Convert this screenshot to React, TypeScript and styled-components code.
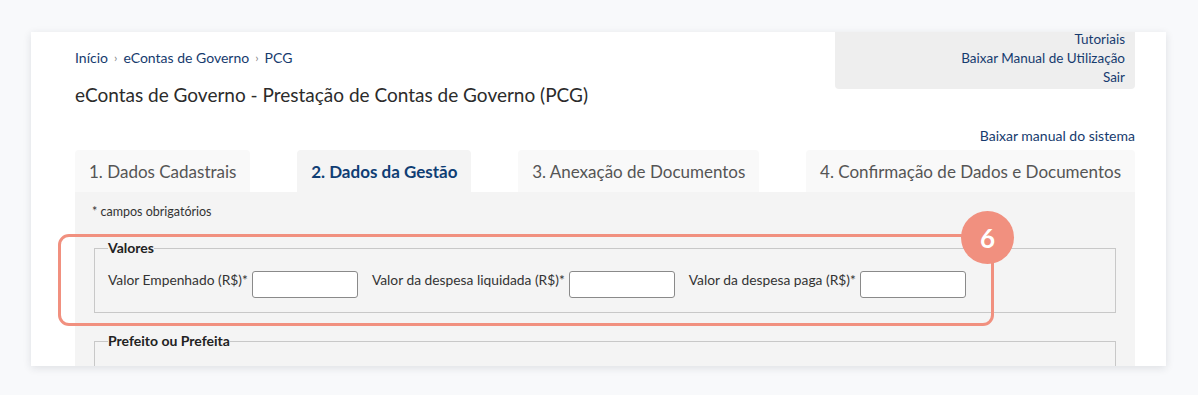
import styled, { createGlobalStyle } from "styled-components";

const GlobalStyle = createGlobalStyle`
  html, body {
    margin: 0;
    padding: 0;
    background: #f8f9fb;
    font-family: Lato, "Noto Sans", sans-serif;
  }
  * {
    box-sizing: border-box;
  }
`;

const Page = styled.div`
  padding: 32px 32px 0 31px;
  height: 395px;
  overflow: hidden;
`;

const Card = styled.div`
  position: relative;
  width: 1135px;
  height: 334px;
  background: #ffffff;
  padding: 0 31px 0 44px;
  box-shadow: 0 2px 8px rgba(30, 40, 60, 0.12);
  overflow: hidden;
`;

const Header = styled.div`
  display: flex;
  justify-content: space-between;
  align-items: flex-start;
`;

const TitleBlock = styled.div`
  padding-top: 17px;
`;

const Breadcrumb = styled.nav`
  display: flex;
  align-items: center;
  gap: 6px;
  font-size: 14px;
  line-height: 18px;
  color: #163b6e;
`;

const Crumb = styled.a`
  color: #163b6e;
  text-decoration: none;
`;

const Sep = styled.span`
  color: #888;
  font-size: 12px;
`;

const Title = styled.h1`
  margin: 16px 0 0;
  font-size: 19px;
  line-height: 24px;
  font-weight: 400;
  color: #2b2b2b;
`;

const UserBox = styled.div`
  margin-top: -2px;
  width: 300px;
  height: 59px;
  padding: 0 10px;
  background: #eeeeee;
  border-radius: 0 0 4px 4px;
  display: flex;
  flex-direction: column;
  align-items: flex-end;
`;

const BoxLink = styled.a`
  font-size: 13.5px;
  line-height: 19px;
  color: #163b6e;
  text-decoration: none;
`;

const ManualRow = styled.div`
  display: flex;
  justify-content: flex-end;
  margin-top: 20px;
`;

const ManualLink = styled.a`
  font-size: 14px;
  line-height: 18px;
  color: #163b6e;
  text-decoration: none;
`;

const Tabs = styled.div`
  display: flex;
  justify-content: space-between;
  margin-top: 5px;
`;

const Tab = styled.div<{ $active?: boolean }>`
  height: 42px;
  padding: 0 14px;
  display: flex;
  align-items: center;
  border-radius: 4px 4px 0 0;
  font-size: 17px;
  background: ${(p) => (p.$active ? "#f4f4f4" : "#f9f9f9")};
  color: ${(p) => (p.$active ? "#0f3e74" : "#555555")};
  font-weight: ${(p) => (p.$active ? 700 : 400)};
`;

const Panel = styled.div`
  background: #f4f4f4;
  padding: 12px 19px 0;
  height: 200px;
`;

const Required = styled.div`
  font-size: 12.5px;
  line-height: 16px;
  color: #333;
  margin-left: -2px;
  margin-bottom: 20px;
`;

const Fieldset = styled.fieldset`
  margin: 0 0 20px;
  padding: 15px 13px 14px;
  border: 1px solid #c8c8c8;
  min-width: 0;
`;

const Legend = styled.legend`
  padding: 0;
  font-size: 14px;
  line-height: 16px;
  font-weight: 700;
  color: #222;
`;

const FieldRow = styled.div`
  display: flex;
  align-items: center;
  gap: 14px;
`;

const Field = styled.div`
  display: flex;
  align-items: center;
  gap: 4px;
`;

const Label = styled.label`
  font-size: 13.8px;
  line-height: 16px;
  color: #333;
  margin-bottom: 10px;
`;

const Input = styled.input`
  width: 106px;
  height: 27px;
  border: 1px solid #8a8a8a;
  border-radius: 3px;
  background: #fff;
`;

const Highlight = styled.div`
  position: absolute;
  left: 27px;
  top: 202px;
  width: 936px;
  height: 92px;
  border: 3px solid #f1907f;
  border-radius: 11px;
  pointer-events: none;
`;

const Badge = styled.div`
  position: absolute;
  left: 930px;
  top: 179px;
  width: 53px;
  height: 53px;
  border-radius: 50%;
  background: #f1907f;
  color: #fff;
  display: flex;
  align-items: center;
  justify-content: center;
  font-size: 26px;
  font-weight: 700;
`;

const fields = [
  "Valor Empenhado (R$)*",
  "Valor da despesa liquidada (R$)*",
  "Valor da despesa paga (R$)*",
];

const tabs = [
  "1. Dados Cadastrais",
  "2. Dados da Gestão",
  "3. Anexação de Documentos",
  "4. Confirmação de Dados e Documentos",
];

export default function App() {
  return (
    <>
      <GlobalStyle />
      <Page>
        <Card>
          <Header>
            <TitleBlock>
              <Breadcrumb>
                <Crumb>Início</Crumb>
                <Sep>›</Sep>
                <Crumb>eContas de Governo</Crumb>
                <Sep>›</Sep>
                <Crumb>PCG</Crumb>
              </Breadcrumb>
              <Title>eContas de Governo - Prestação de Contas de Governo (PCG)</Title>
            </TitleBlock>
            <UserBox>
              <BoxLink>Tutoriais</BoxLink>
              <BoxLink>Baixar Manual de Utilização</BoxLink>
              <BoxLink>Sair</BoxLink>
            </UserBox>
          </Header>
          <ManualRow>
            <ManualLink>Baixar manual do sistema</ManualLink>
          </ManualRow>
          <Tabs>
            {tabs.map((t, i) => (
              <Tab key={t} $active={i === 1}>
                {t}
              </Tab>
            ))}
          </Tabs>
          <Panel>
            <Required>* campos obrigatórios</Required>
            <Fieldset>
              <Legend>Valores</Legend>
              <FieldRow>
                {fields.map((f) => (
                  <Field key={f}>
                    <Label>{f}</Label>
                    <Input type="text" />
                  </Field>
                ))}
              </FieldRow>
            </Fieldset>
            <Fieldset>
              <Legend>Prefeito ou Prefeita</Legend>
            </Fieldset>
          </Panel>
          <Highlight />
          <Badge>6</Badge>
        </Card>
      </Page>
    </>
  );
}
